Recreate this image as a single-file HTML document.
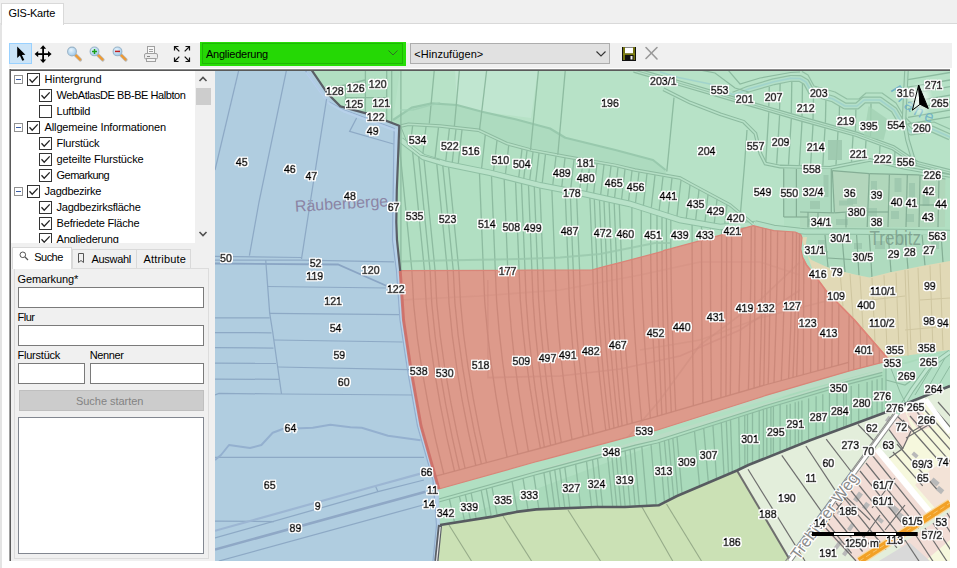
<!DOCTYPE html><html lang="de"><head><meta charset="utf-8"><title>GIS-Karte</title><style>
*{box-sizing:border-box}
html,body{margin:0;padding:0}
body{width:957px;height:568px;background:#fff;font-family:"Liberation Sans",sans-serif;font-size:11px;color:#000;position:relative;overflow:hidden}
.abs{position:absolute}
.t{position:absolute;white-space:nowrap;line-height:14px;height:14px}
.cb{position:absolute;width:13px;height:13px;border:1px solid #333;background:#fff}
.ex{position:absolute;width:9px;height:9px;border:1px solid #919191;background:#fff}
.ex:after{content:"";position:absolute;left:1px;top:3px;width:5px;height:1px;background:#3b5ea6}
.inp{position:absolute;background:#fff;border:1px solid #7a7a7a}
</style></head><body>
<div class="abs" style="left:0;top:0;width:957px;height:24px;background:#f0f0f0"></div>
<div class="abs" style="left:0px;top:23px;width:957px;height:545px;background:#fff;border-left:2px solid #e4e4e4;border-top:1px solid #d9d9d9"></div>
<div class="abs" style="left:1px;top:3px;width:63px;height:22px;background:#fff;border:1px solid #d9d9d9;border-bottom:none"></div>
<div class="t" style="left:8.5px;top:6px;letter-spacing:-0.267px;">GIS-Karte</div>
<div class="abs" style="left:9px;top:43px;width:943px;height:25px;background:#f0f0f0"></div>
<div class="abs" style="left:9px;top:43px;width:23px;height:21px;background:#cce4f7;border:1px solid #99d1ff"></div>
<svg class="abs" style="left:0;top:40px" width="957" height="30" viewBox="0 40 957 30">
<defs>
<radialGradient id="gl" cx="0.4" cy="0.35" r="0.7"><stop offset="0" stop-color="#e8f4fc"/><stop offset="1" stop-color="#9cc8ea"/></radialGradient>
</defs>
<!-- cursor arrow -->
<path d="M17.2 46.6 L17.2 58 L19.9 55.6 L22.3 60.8 L24.3 59.9 L21.9 54.9 L25.4 54.7 Z" fill="#000"/>
<!-- move -->
<g fill="#000" stroke="none">
<rect x="42.2" y="47" width="1.8" height="14"/><rect x="36" y="53.2" width="14" height="1.8"/>
<path d="M43.1 45.2 L46.2 48.8 L40 48.8 Z"/><path d="M43.1 63 L46.2 59.4 L40 59.4 Z"/>
<path d="M34.6 54.1 L38.2 51 L38.2 57.2 Z"/><path d="M51.6 54.1 L48 51 L48 57.2 Z"/>
</g>
<!-- magnifiers -->
<g id="mag1">
<path d="M75.5 55 L80.3 59.8" stroke="#b8b8b8" stroke-width="3.6" stroke-linecap="round"/>
<path d="M75.8 55.3 L80 59.5" stroke="#f09a30" stroke-width="2.2" stroke-linecap="round"/>
<circle cx="72" cy="51.5" r="4.4" fill="url(#gl)" stroke="#9ab4c8" stroke-width="1.1"/>
</g>
<g>
<path d="M98 55 L102.8 59.8" stroke="#b8b8b8" stroke-width="3.6" stroke-linecap="round"/>
<path d="M98.3 55.3 L102.5 59.5" stroke="#f09a30" stroke-width="2.2" stroke-linecap="round"/>
<circle cx="94.5" cy="51.4" r="4.4" fill="url(#gl)" stroke="#9ab4c8" stroke-width="1.1"/>
<path d="M92 51.4 H97 M94.5 48.9 V53.9" stroke="#18a018" stroke-width="1.5"/>
</g>
<g>
<path d="M121 55 L125.8 59.8" stroke="#b8b8b8" stroke-width="3.6" stroke-linecap="round"/>
<path d="M121.3 55.3 L125.5 59.5" stroke="#f09a30" stroke-width="2.2" stroke-linecap="round"/>
<circle cx="117.5" cy="51.4" r="4.4" fill="url(#gl)" stroke="#9ab4c8" stroke-width="1.1"/>
<path d="M115 51.4 H120" stroke="#c02020" stroke-width="1.5"/>
</g>
<!-- printer -->
<g fill="none" stroke="#a0a0a0" stroke-width="1">
<rect x="147.5" y="46.5" width="7" height="7" fill="#f8f8f8"/>
<path d="M149 49.5 H153 M149 51.5 H153"/>
<rect x="144.500" y="53.5" width="13" height="5.500" rx="1.500" fill="#ececec"/>
<rect x="146.500" y="58.5" width="9" height="3" fill="#f4f4f4"/>
<path d="M147 56.5 H150" stroke="#888"/>
</g>
<!-- fullscreen -->
<g fill="none" stroke="#111" stroke-width="1.2">
<path d="M174.500 50.500 V46.500 H178.500 M174.500 46.500 L179.300 51.300"/>
<path d="M185.500 46.500 H189.500 V50.500 M189.500 46.500 L184.700 51.300"/>
<path d="M174.500 57.500 V61.500 H178.500 M174.500 61.500 L179.300 56.700"/>
<path d="M185.500 61.500 H189.500 V57.500 M189.500 61.500 L184.700 56.700"/>
</g>
<!-- save -->
<g>
<rect x="622" y="47" width="14" height="14" fill="#111"/>
<rect x="623.200" y="47" width="1.600" height="13" fill="#8a8a10"/><rect x="633.200" y="47" width="1.600" height="13" fill="#8a8a10"/>
<rect x="625" y="47.500" width="8" height="6" fill="#fff"/>
<rect x="625" y="55" width="8.500" height="5.500" fill="#111"/>
<rect x="630.500" y="56" width="2" height="3.500" fill="#f4f4f4"/>
<rect x="623" y="53.5" width="12" height="1.300" fill="#8a8a10"/>
</g>
<!-- X -->
<g stroke="#9a9a9a" stroke-width="1.600" fill="none" stroke-linecap="round">
<path d="M646 47.500 L657 59"/><path d="M657 47.500 L646 58.500"/>
</g>
</svg>

<div class="abs" style="left:200px;top:42px;width:206px;height:24px;background:#26de06"></div>
<div class="abs" style="left:202px;top:43px;width:201px;height:21px;background:#25d805;border:1px solid #1fb606"></div>
<div class="t" style="left:206px;top:47px;letter-spacing:-0.237px;">Angliederung</div>
<svg class="abs" style="left:387px;top:49px" width="12" height="8" viewBox="0 0 12 8"><path d="M1.5 1.5 L6 6 L10.5 1.5" fill="none" stroke="#2f6f25" stroke-width="1"/></svg>
<div class="abs" style="left:410px;top:43px;width:200px;height:21px;background:#e1e1e1;border:1px solid #adadad"></div>
<div class="t" style="left:414.3px;top:47px;letter-spacing:0.042px;">&lt;Hinzufügen&gt;</div>
<svg class="abs" style="left:595px;top:50px" width="12" height="8" viewBox="0 0 12 8"><path d="M1.5 1.5 L6 6 L10.5 1.5" fill="none" stroke="#333" stroke-width="1.1"/></svg>
<div class="abs" style="left:9px;top:69px;width:206px;height:492px;background:#f0f0f0"></div>
<div class="abs" style="left:9px;top:69px;width:941px;height:2px;background:#5a5a5a;border-top:1px solid #8a8a8a"></div>
<div class="abs" style="left:9px;top:69px;width:2px;height:492px;background:#5a5a5a;border-left:1px solid #a0a0a0"></div>
<div class="abs" style="left:11px;top:71px;width:184px;height:172px;background:#fff;overflow:hidden" id="tree">
<div class="ex" style="left:3px;top:4px"></div>
<div class="cb" style="left:16px;top:2px"><svg width="11" height="11" viewBox="0 0 11 11" style="position:absolute;left:0;top:0"><path d="M1.5 5.3 L4.2 8.2 L9.7 2.4" fill="none" stroke="#222" stroke-width="1.3"/></svg></div>
<div class="t" style="left:33.6px;top:1px;letter-spacing:-0.053px;">Hintergrund</div>
<div class="cb" style="left:28px;top:18px"><svg width="11" height="11" viewBox="0 0 11 11" style="position:absolute;left:0;top:0"><path d="M1.5 5.3 L4.2 8.2 L9.7 2.4" fill="none" stroke="#222" stroke-width="1.3"/></svg></div>
<div class="t" style="left:45.6px;top:17px;letter-spacing:-0.429px;">WebAtlasDE BB-BE Halbton</div>
<div class="cb" style="left:28px;top:34px"></div>
<div class="t" style="left:45.6px;top:33px;letter-spacing:-0.236px;">Luftbild</div>
<div class="ex" style="left:3px;top:52px"></div>
<div class="cb" style="left:16px;top:50px"><svg width="11" height="11" viewBox="0 0 11 11" style="position:absolute;left:0;top:0"><path d="M1.5 5.3 L4.2 8.2 L9.7 2.4" fill="none" stroke="#222" stroke-width="1.3"/></svg></div>
<div class="t" style="left:33.6px;top:49px;letter-spacing:-0.144px;">Allgemeine Informationen</div>
<div class="cb" style="left:28px;top:66px"><svg width="11" height="11" viewBox="0 0 11 11" style="position:absolute;left:0;top:0"><path d="M1.5 5.3 L4.2 8.2 L9.7 2.4" fill="none" stroke="#222" stroke-width="1.3"/></svg></div>
<div class="t" style="left:45.6px;top:65px;letter-spacing:-0.225px;">Flurstück</div>
<div class="cb" style="left:28px;top:82px"><svg width="11" height="11" viewBox="0 0 11 11" style="position:absolute;left:0;top:0"><path d="M1.5 5.3 L4.2 8.2 L9.7 2.4" fill="none" stroke="#222" stroke-width="1.3"/></svg></div>
<div class="t" style="left:45.6px;top:81px;letter-spacing:-0.119px;">geteilte Flurstücke</div>
<div class="cb" style="left:28px;top:98px"><svg width="11" height="11" viewBox="0 0 11 11" style="position:absolute;left:0;top:0"><path d="M1.5 5.3 L4.2 8.2 L9.7 2.4" fill="none" stroke="#222" stroke-width="1.3"/></svg></div>
<div class="t" style="left:45.6px;top:97px;letter-spacing:-0.543px;">Gemarkung</div>
<div class="ex" style="left:3px;top:116px"></div>
<div class="cb" style="left:16px;top:114px"><svg width="11" height="11" viewBox="0 0 11 11" style="position:absolute;left:0;top:0"><path d="M1.5 5.3 L4.2 8.2 L9.7 2.4" fill="none" stroke="#222" stroke-width="1.3"/></svg></div>
<div class="t" style="left:33.6px;top:113px;letter-spacing:-0.266px;">Jagdbezirke</div>
<div class="cb" style="left:28px;top:130px"><svg width="11" height="11" viewBox="0 0 11 11" style="position:absolute;left:0;top:0"><path d="M1.5 5.3 L4.2 8.2 L9.7 2.4" fill="none" stroke="#222" stroke-width="1.3"/></svg></div>
<div class="t" style="left:45.6px;top:129px;letter-spacing:-0.239px;">Jagdbezirksfläche</div>
<div class="cb" style="left:28px;top:146px"><svg width="11" height="11" viewBox="0 0 11 11" style="position:absolute;left:0;top:0"><path d="M1.5 5.3 L4.2 8.2 L9.7 2.4" fill="none" stroke="#222" stroke-width="1.3"/></svg></div>
<div class="t" style="left:45.6px;top:145px;letter-spacing:-0.201px;">Befriedete Fläche</div>
<div class="cb" style="left:28px;top:162px"><svg width="11" height="11" viewBox="0 0 11 11" style="position:absolute;left:0;top:0"><path d="M1.5 5.3 L4.2 8.2 L9.7 2.4" fill="none" stroke="#222" stroke-width="1.3"/></svg></div>
<div class="t" style="left:45.6px;top:161px;letter-spacing:-0.237px;">Angliederung</div>
</div>
<div class="abs" style="left:195px;top:71px;width:17px;height:172px;background:#f0f0f0"></div>
<div class="abs" style="left:196px;top:88px;width:15px;height:17px;background:#cdcdcd"></div>
<svg class="abs" style="left:198px;top:75px" width="10" height="8" viewBox="0 0 10 8"><path d="M1.5 6 L5 2.5 L8.5 6" fill="none" stroke="#505050" stroke-width="1.6"/></svg>
<svg class="abs" style="left:198px;top:230px" width="10" height="8" viewBox="0 0 10 8"><path d="M1.5 2 L5 5.5 L8.5 2" fill="none" stroke="#505050" stroke-width="1.6"/></svg>
<div class="abs" style="left:14px;top:268px;width:195px;height:291px;background:#f0f0f0;border:1px solid #dcdcdc;border-top:1px solid #dcdcdc"></div>
<div class="abs" style="left:72px;top:249px;width:65px;height:19px;background:#f0f0f0;border:1px solid #d9d9d9;border-bottom:none"></div>
<div class="abs" style="left:136px;top:249px;width:55px;height:19px;background:#f0f0f0;border:1px solid #d9d9d9;border-bottom:none"></div>
<div class="abs" style="left:12px;top:247px;width:60px;height:22px;background:#fff;border:1px solid #d9d9d9;border-bottom:none"></div>
<svg class="abs" style="left:19px;top:251px" width="10" height="10" viewBox="0 0 10 10"><circle cx="3.8" cy="3.8" r="2.8" fill="none" stroke="#555" stroke-width="1"/><path d="M6 6 L9 9" stroke="#555" stroke-width="1.2"/></svg>
<div class="t" style="left:34.3px;top:250px;letter-spacing:-0.561px;">Suche</div>
<svg class="abs" style="left:77px;top:253px" width="8" height="11" viewBox="0 0 8 11"><path d="M1.5 0.5 H6.5 V9.5 L4 7.5 L1.5 9.5 Z" fill="none" stroke="#555" stroke-width="1"/></svg>
<div class="t" style="left:91.5px;top:252px;letter-spacing:-0.297px;">Auswahl</div>
<div class="t" style="left:143.6px;top:252px;letter-spacing:0.159px;">Attribute</div>
<div class="t" style="left:17.5px;top:272px;letter-spacing:-0.107px;">Gemarkung*</div>
<div class="inp" style="left:18px;top:287px;width:186px;height:21px"></div>
<div class="t" style="left:17.5px;top:310px;letter-spacing:-0.488px;">Flur</div>
<div class="inp" style="left:18px;top:325px;width:186px;height:21px"></div>
<div class="t" style="left:17.5px;top:348px;letter-spacing:-0.225px;">Flurstück</div>
<div class="t" style="left:89.7px;top:348px;letter-spacing:-0.380px;">Nenner</div>
<div class="inp" style="left:18px;top:363px;width:67px;height:21px"></div>
<div class="inp" style="left:90px;top:363px;width:114px;height:21px"></div>
<div class="abs" style="left:19px;top:390px;width:185px;height:21px;background:#cccccc;border:1px solid #bfbfbf"></div>
<div class="t" style="left:76px;top:394px;letter-spacing:-0.044px;color:#838383;">Suche starten</div>
<div class="inp" style="left:18px;top:417px;width:186px;height:137px;border-color:#828790"></div>
<svg class="abs" style="left:215px;top:71px" width="735" height="490" viewBox="215 71 735 490" font-family="Liberation Sans, sans-serif">
<defs><filter id="halo" x="0" y="0" width="100%" height="100%" filterUnits="objectBoundingBox"><feMorphology in="SourceAlpha" operator="dilate" radius="1.1" result="d"/><feGaussianBlur in="d" stdDeviation="0.45" result="b"/><feComponentTransfer in="b" result="b2"><feFuncA type="linear" slope="1.6"/></feComponentTransfer><feFlood flood-color="#fff"/><feComposite in2="b2" operator="in" result="h"/><feMerge><feMergeNode in="h"/><feMergeNode in="SourceGraphic"/></feMerge></filter>
<clipPath id="redclip"><polygon points="400.2,270.7 530.4,270.2 591.5,270.0 605.0,266.3 620.0,262.6 662.6,251.4 664.0,250.3 670.0,248.9 725.3,233.8 740.0,229.3 753.2,225.7 773.9,230.7 795.2,232.0 800.8,234.5 802.0,237.6 800.8,248.9 802.7,257.7 806.5,265.0 814.5,275.0 827.0,292.0 854.5,320.0 887.4,358.0 882.3,362.4 848.6,371.2 765.0,395.7 755.0,399.0 657.5,430.0 635.3,435.1 545.0,459.3 535.0,462.0 438.8,489.0 421.0,426.0 411.0,370.0 403.5,320.0"/></clipPath></defs>
<rect x="215" y="70" width="735" height="492" fill="#b1dfc2"/>
<polygon points="400.0,70.0 950.0,70.0 950.0,176.0 905.0,168.0 870.0,160.0 830.0,167.8 784.0,170.0 784.0,226.0 753.0,224.0 730.0,205.0 692.8,185.0 680.0,178.0 665.6,174.0 665.6,170.0 665.6,170.0 653.0,160.0 615.4,150.0 565.3,137.7 550.0,128.5 515.4,119.3 482.0,111.8 456.9,105.0 431.8,103.4 411.7,107.6 393.0,120.0" fill="#b7e2c7" />
<polygon points="400.9,126.0 408.4,124.3 440.0,126.0 478.6,130.2 507.0,143.6 532.0,150.3 565.0,156.5 615.4,165.3 635.0,170.0 665.6,174.0 665.6,170.0 665.6,170.0 653.0,160.0 615.4,150.0 565.3,137.7 550.0,128.5 515.4,119.3 482.0,111.8 456.9,105.0 431.8,103.4 411.7,107.6 393.0,120.0" fill="#addbbf" />
<polygon points="455.0,70.0 538.0,70.0 531.0,118.0 482.0,111.8 456.9,105.0" fill="#c0e6d0" />
<polyline points="400.9,140.0 423.4,157.0 445.0,163.6 490.0,172.8 540.0,185.3 580.0,193.0 630.0,204.0 680.0,220.0 720.0,227.0 755.4,224.0" fill="none" stroke="#8fc0a4" stroke-width="6.5" />
<polyline points="400.9,140.0 423.4,157.0 445.0,163.6 490.0,172.8 540.0,185.3 580.0,193.0 630.0,204.0 680.0,220.0 720.0,227.0 755.4,224.0" fill="none" stroke="#b9e2c9" stroke-width="4.5" />
<polyline points="400.9,126.0 408.4,124.3 440.0,126.0 478.6,130.2 507.0,143.6 532.0,150.3 565.0,156.5 615.4,165.3 635.0,170.0 680.0,178.0 692.8,185.0 730.0,205.0 753.0,224.0" fill="none" stroke="#8dbba0" stroke-width="3.4" />
<polyline points="400.9,126.0 408.4,124.3 440.0,126.0 478.6,130.2 507.0,143.6 532.0,150.3 565.0,156.5 615.4,165.3 635.0,170.0 680.0,178.0 692.8,185.0 730.0,205.0 753.0,224.0" fill="none" stroke="#b5dfc5" stroke-width="1.6" />
<polyline points="393.0,120.0 411.7,107.6 431.8,103.4 456.9,105.0 482.0,111.8 515.4,119.3 550.0,128.5 565.3,137.7 615.4,150.0 653.0,160.0 665.6,170.0" fill="none" stroke="#98c9ad" stroke-width="2.2" stroke-linejoin="round"/>
<g stroke="#8dbba0" stroke-width="1.3" fill="none">
<path d="M345.4 85.0 L345.4 107.6"/>
<path d="M365.4 70.0 L365.4 112.5"/>
<path d="M386.7 70.0 L386.7 120.0"/>
<path d="M391.7 70.0 L391.7 122.0"/>
<path d="M400.9 70.0 L400.9 270.0"/>
<path d="M345.0 97.6 L387.0 97.6"/>
<path d="M327.0 88.0 L345.4 85.0"/>
<path d="M345.4 85.0 L365.0 80.0"/>
<path d="M434.3 70.0 L429.3 123.5"/>
<path d="M459.4 70.0 L454.4 126.0"/>
<path d="M486.7 70.0 L479.5 130.2"/>
<path d="M538.5 70.0 L530.5 150.3"/>
<path d="M565.3 70.0 L557.8 154.7"/>
<path d="M674.0 97.6 L666.8 171.5"/>
<path d="M412.6 126.0 L410.3 144.1"/>
<path d="M426.0 126.7 L422.9 153.6"/>
<path d="M438.5 127.4 L435.1 157.6"/>
<path d="M449.4 128.5 L445.8 160.8"/>
<path d="M456.0 129.2 L452.3 162.1"/>
<path d="M462.0 129.9 L458.3 163.3"/>
<path d="M485.3 134.9 L481.6 168.1"/>
<path d="M497.0 140.4 L493.6 170.7"/>
<path d="M508.7 145.6 L505.5 173.7"/>
<path d="M522.0 149.1 L518.8 177.0"/>
<path d="M527.0 150.5 L523.8 178.3"/>
<path d="M533.0 152.0 L529.8 179.8"/>
<path d="M539.0 153.1 L535.8 181.3"/>
<path d="M545.5 154.3 L542.3 182.7"/>
<path d="M556.0 156.3 L552.8 184.8"/>
<path d="M565.0 158.0 L561.8 186.5"/>
<path d="M574.0 159.6 L570.8 188.2"/>
<path d="M583.0 161.1 L579.7 190.0"/>
<path d="M590.0 162.4 L586.7 191.5"/>
<path d="M597.0 163.6 L593.7 193.0"/>
<path d="M604.0 164.8 L600.7 194.5"/>
<path d="M611.0 166.0 L607.6 196.1"/>
<path d="M618.0 167.4 L614.6 197.6"/>
<path d="M625.0 169.1 L621.6 199.2"/>
<path d="M632.0 170.8 L628.6 200.7"/>
<path d="M639.0 172.2 L635.5 202.8"/>
<path d="M647.0 173.6 L643.4 205.3"/>
<path d="M655.0 175.1 L651.3 207.8"/>
<path d="M663.0 176.5 L659.2 210.3"/>
<path d="M672.0 178.1 L668.1 213.2"/>
<path d="M681.0 180.0 L677.0 216.0"/>
<path d="M690.0 185.0 L686.3 218.1"/>
<path d="M699.0 189.8 L695.7 219.7"/>
<path d="M708.0 194.7 L705.0 221.4"/>
<path d="M717.0 199.5 L714.3 223.0"/>
<path d="M727.0 204.9 L724.8 223.6"/>
<path d="M737.0 212.3 L735.7 222.7"/>
<path d="M399.0 141.6 L411.9 270.7"/>
<path d="M412.6 151.9 L424.5 270.6"/>
<path d="M418.7 156.4 L430.1 270.6"/>
<path d="M424.1 160.2 L435.1 270.6"/>
<path d="M436.8 164.1 L447.4 270.5"/>
<path d="M442.8 165.9 L453.3 270.5"/>
<path d="M448.6 167.3 L458.9 270.5"/>
<path d="M479.5 173.7 L483.4 270.4"/>
<path d="M491.5 176.2 L495.3 270.3"/>
<path d="M504.2 179.3 L507.8 270.3"/>
<path d="M515.6 182.2 L519.1 270.2"/>
<path d="M521.5 183.7 L525.0 270.2"/>
<path d="M528.5 185.4 L531.9 270.2"/>
<path d="M534.3 186.9 L537.6 270.2"/>
<path d="M539.9 188.3 L543.2 270.2"/>
<path d="M551.9 190.6 L555.1 270.1"/>
<path d="M565.2 193.2 L568.3 270.1"/>
<path d="M570.3 194.1 L573.3 270.1"/>
<path d="M576.6 195.3 L579.6 270.0"/>
<path d="M589.9 198.2 L592.8 269.6"/>
<path d="M594.3 199.2 L597.1 268.5"/>
<path d="M599.5 200.3 L602.2 267.1"/>
<path d="M604.0 201.3 L606.6 265.9"/>
<path d="M609.1 202.4 L611.6 264.7"/>
<path d="M614.2 203.5 L616.6 263.4"/>
<path d="M619.3 204.6 L621.6 262.2"/>
<path d="M631.9 207.6 L631.9 259.5"/>
<path d="M641.3 210.6 L641.3 257.0"/>
<path d="M650.7 213.6 L650.7 254.5"/>
<path d="M657.0 215.6 L657.0 252.9"/>
<path d="M662.0 217.2 L662.0 251.6"/>
<path d="M666.4 218.6 L666.4 249.7"/>
<path d="M670.8 220.1 L670.8 248.7"/>
<path d="M692.1 225.1 L692.1 242.9"/>
<path d="M701.5 226.8 L701.5 240.3"/>
<path d="M710.3 228.3 L710.3 237.9"/>
<path d="M721.6 229.9 L721.6 234.8"/>
<path d="M726.6 229.4 L726.6 233.4"/>
</g>
<polyline points="400.0,261.5 440.0,260.5 520.0,259.0 560.0,257.5 600.0,254.0 640.0,246.0 655.0,243.0 670.0,243.0" fill="none" stroke="#98c7ab" stroke-width="2" stroke-opacity="0.8" />
<polyline points="400.0,110.0 413.0,110.0 440.0,102.6" fill="none" stroke="#9fd0b4" stroke-width="1.5" stroke-opacity="0.8" />
<polyline points="400.5,125.7 408.0,145.0 420.5,155.0 440.0,160.0" fill="none" stroke="#8dbba0" stroke-width="1" />
<polyline points="733.6,95.0 748.7,89.0 773.8,81.7 790.5,78.4 800.0,78.5 806.0,82.0 812.0,93.0 833.0,99.0 845.0,106.0 857.0,106.0 864.0,100.0 880.0,100.0 894.0,110.0 901.0,122.0 911.0,132.0 932.0,129.0 950.0,137.0" fill="none" stroke="#8dbba0" stroke-width="7" stroke-opacity="0.9" stroke-linejoin="round"/>
<polyline points="733.6,95.0 748.7,89.0 773.8,81.7 790.5,78.4 800.0,78.5 806.0,82.0 812.0,93.0 833.0,99.0 845.0,106.0 857.0,106.0 864.0,100.0 880.0,100.0 894.0,110.0 901.0,122.0 911.0,132.0 932.0,129.0 950.0,137.0" fill="none" stroke="#b3dfc8" stroke-width="4.6" stroke-linejoin="round"/>
<polyline points="733.6,95.0 748.7,89.0 773.8,81.7 790.5,78.4 800.0,78.5 806.0,82.0 812.0,93.0 833.0,99.0 845.0,106.0 857.0,106.0 864.0,100.0 880.0,100.0 894.0,110.0 901.0,122.0 911.0,132.0 932.0,129.0 950.0,137.0" fill="none" stroke="#9fd2cb" stroke-width="1.6" stroke-opacity="0.9" stroke-linejoin="round"/>
<polyline points="634.0,70.0 640.0,71.7 680.0,83.4 742.7,101.7 800.0,118.5 856.9,134.4 893.0,147.7 917.0,163.6 950.0,172.0" fill="none" stroke="#8dbba0" stroke-width="5.6" />
<polyline points="634.0,70.0 640.0,71.7 680.0,83.4 742.7,101.7 800.0,118.5 856.9,134.4 893.0,147.7 917.0,163.6 950.0,172.0" fill="none" stroke="#b5dfc6" stroke-width="3.2" />
<polyline points="634.0,70.0 640.0,71.7 680.0,83.4 742.7,101.7 800.0,118.5 856.9,134.4 893.0,147.7 917.0,163.6 950.0,172.0" fill="none" stroke="#8dbba0" stroke-width="0.8" />
<polyline points="660.0,72.0 678.5,77.5 710.0,84.0 733.6,95.0" fill="none" stroke="#9fd2cb" stroke-width="1.6" stroke-opacity="0.9" />
<polyline points="802.0,71.5 808.0,75.0 814.0,86.0 835.0,92.0 847.0,99.0 859.0,99.0 866.0,93.0 882.0,93.0 896.0,103.0 903.0,115.0 913.0,125.0 934.0,122.0 952.0,130.0" fill="none" stroke="#8dbba0" stroke-width="1.2" stroke-opacity="0.9" stroke-linejoin="round"/>
<polyline points="700.0,70.0 715.0,73.0 735.0,88.0 748.7,92.0" fill="none" stroke="#8dbba0" stroke-width="1.2" />
<polyline points="728.0,70.0 740.0,84.0 760.0,78.0 790.5,72.5 800.0,72.0" fill="none" stroke="#8dbba0" stroke-width="1.2" />
<polyline points="906.5,70.0 904.0,120.0 907.5,140.0 915.0,165.0" fill="none" stroke="#8dbba0" stroke-width="4.6" />
<polyline points="906.5,70.0 904.0,120.0 907.5,140.0 915.0,165.0" fill="none" stroke="#b5dfc6" stroke-width="2.4" />
<polyline points="663.4,89.2 690.0,102.6 720.3,114.3 743.7,121.8 755.4,133.5 760.4,153.6 765.4,163.6 780.0,166.5 830.0,167.8 870.0,160.0 905.0,168.0 950.0,176.0" fill="none" stroke="#8dbba0" stroke-width="3.8" />
<polyline points="663.4,89.2 690.0,102.6 720.3,114.3 743.7,121.8 755.4,133.5 760.4,153.6 765.4,163.6 780.0,166.5 830.0,167.8 870.0,160.0 905.0,168.0 950.0,176.0" fill="none" stroke="#b6e1c7" stroke-width="1.6" />
<g stroke="#8dbba0" stroke-width="1.3" fill="none">
<polyline points="747.0,130.0 744.5,165.0 741.4,202.0 740.0,218.0"/>
<path d="M768.8 112.2 L765.8 161.7"/>
<path d="M779.6 115.3 L776.7 163.8"/>
<path d="M791.3 118.7 L788.5 164.7"/>
<path d="M802.0 121.9 L799.4 165.0"/>
<path d="M813.0 124.9 L810.6 165.3"/>
<path d="M825.0 128.3 L822.8 165.6"/>
<path d="M838.0 131.9 L836.0 164.8"/>
<path d="M853.0 136.1 L851.5 161.9"/>
<path d="M866.0 140.6 L864.9 159.4"/>
<path d="M880.0 145.7 L879.2 159.6"/>
<path d="M895.0 151.8 L894.3 163.0"/>
<path d="M769.3 86.7 L768.8 106.6"/>
<path d="M780.1 84.1 L779.6 109.7"/>
<path d="M791.8 81.9 L791.3 113.1"/>
<path d="M802.5 83.2 L802.0 116.3"/>
<path d="M813.5 96.8 L813.0 119.3"/>
<path d="M825.9 100.3 L825.4 122.8"/>
<path d="M839.5 106.0 L839.0 126.6"/>
<path d="M855.9 109.5 L855.4 131.2"/>
<path d="M871.0 103.5 L870.5 136.6"/>
<path d="M908.0 79.7 L950.0 72.5"/>
<path d="M908.0 87.2 L950.0 80.0"/>
<path d="M908.0 93.9 L950.0 86.7"/>
<path d="M908.0 102.3 L950.0 95.1"/>
<path d="M908.0 109.0 L950.0 101.8"/>
<path d="M908.0 117.3 L950.0 110.1"/>
<path d="M908.0 124.0 L950.0 116.8"/>
</g>
<polyline points="755.0,223.5 773.9,228.0 805.0,231.5 850.0,231.5 900.0,232.0 950.0,233.0" fill="none" stroke="#8dbba0" stroke-width="6.6" />
<polyline points="755.0,223.5 773.9,228.0 805.0,231.5 850.0,231.5 900.0,232.0 950.0,233.0" fill="none" stroke="#b3dfc5" stroke-width="4.6" />
<polygon points="868.6,106.0 888.7,120.0 883.6,140.0 863.6,137.0" fill="#a3d2b4" opacity="0.8"/>
<polygon points="783.7,168.5 831.3,169.0 831.3,217.0 783.7,217.0" fill="#aedabf" />
<polygon points="832.3,170.6 869.3,173.7 867.2,210.7 834.4,212.8" fill="#b3d6bc" />
<polygon points="869.3,173.7 917.9,174.8 945.4,179.0 945.0,227.0 869.3,227.6" fill="#b0d7bb" />
<polygon points="800.0,212.0 868.0,212.0 869.3,227.6 800.0,227.5" fill="#afd8bc" />
<polygon points="806.0,235.0 950.0,235.0 950.0,261.0 922.0,266.0 889.5,272.5 869.5,277.5 857.0,275.0 830.7,268.7 811.5,260.0 806.0,250.0" fill="#afdbbf" />
<rect x="823.5" y="175.0" width="5" height="22" fill="#9cc7ad" opacity="0.85"/>
<rect x="839.0" y="200.5" width="14" height="5" fill="#9cc7ad" opacity="0.85"/>
<rect x="847.0" y="196.0" width="10" height="8" fill="#9cc7ad" opacity="0.85"/>
<rect x="871.0" y="181.0" width="6" height="18" fill="#9cc7ad" opacity="0.85"/>
<rect x="894.5" y="178.0" width="7" height="14" fill="#9cc7ad" opacity="0.85"/>
<rect x="909.0" y="183.0" width="6" height="14" fill="#9cc7ad" opacity="0.85"/>
<rect x="922.5" y="194.0" width="7" height="12" fill="#9cc7ad" opacity="0.85"/>
<rect x="836.0" y="219.0" width="12" height="6" fill="#9cc7ad" opacity="0.85"/>
<rect x="867.0" y="208.0" width="10" height="8" fill="#9cc7ad" opacity="0.85"/>
<rect x="875.0" y="241.0" width="10" height="8" fill="#9cc7ad" opacity="0.85"/>
<rect x="896.0" y="235.0" width="8" height="10" fill="#9cc7ad" opacity="0.85"/>
<rect x="931.0" y="239.0" width="8" height="10" fill="#9cc7ad" opacity="0.85"/>
<rect x="810.0" y="201.0" width="10" height="8" fill="#9cc7ad" opacity="0.85"/>
<rect x="818.0" y="240.0" width="8" height="8" fill="#9cc7ad" opacity="0.85"/>
<rect x="828.0" y="140.0" width="14" height="20" fill="#9cc7ad" opacity="0.85"/>
<rect x="808.0" y="219.0" width="8" height="6" fill="#9cc7ad" opacity="0.85"/>
<rect x="891.0" y="211.0" width="8" height="8" fill="#9cc7ad" opacity="0.85"/>
<rect x="906.0" y="214.0" width="8" height="8" fill="#9cc7ad" opacity="0.85"/>
<rect x="854.0" y="243.0" width="8" height="6" fill="#9cc7ad" opacity="0.85"/>
<g stroke="#84ae95" stroke-width="1.2" fill="none">
<path d="M783.7 168.5 L783.7 217.0"/>
<path d="M796.4 169.0 L796.4 217.0"/>
<path d="M783.7 217.0 L808.0 217.0"/>
<path d="M831.3 169.0 L831.3 213.0"/>
<path d="M832.3 170.6 L869.3 173.7"/>
<path d="M869.3 173.7 L917.9 174.8"/>
<path d="M917.9 174.8 L945.4 179.0"/>
<path d="M867.2 210.7 L834.4 212.8"/>
<path d="M834.4 212.8 L832.3 170.6"/>
<path d="M869.3 173.7 L867.2 227.0"/>
<path d="M889.4 174.5 L888.0 227.0"/>
<path d="M907.3 175.0 L906.0 227.0"/>
<path d="M920.0 176.0 L919.0 227.0"/>
<path d="M939.0 178.5 L938.0 227.0"/>
<path d="M919.0 205.0 L945.0 205.0"/>
<path d="M867.2 212.0 L889.0 212.0"/>
<path d="M800.0 212.0 L834.0 212.8"/>
<path d="M808.0 212.0 L808.0 227.5"/>
<path d="M818.0 212.0 L818.0 227.5"/>
<path d="M846.0 213.0 L846.0 227.5"/>
<path d="M825.0 235.0 L828.0 267.0"/>
<path d="M841.8 235.0 L845.0 272.0"/>
<path d="M856.6 235.0 L859.0 275.5"/>
<path d="M869.3 235.0 L872.0 277.0"/>
<path d="M888.3 235.0 L891.0 272.0"/>
<path d="M905.2 235.0 L908.0 269.0"/>
<path d="M922.1 235.0 L925.0 265.5"/>
<path d="M941.1 235.0 L943.0 262.5"/>
<path d="M806.0 250.0 L828.0 252.0"/>
<path d="M828.0 258.0 L859.0 260.0"/>
</g>
<polygon points="801.0,237.6 807.0,237.0 806.0,243.0 806.5,254.0 811.5,260.0 830.7,268.7 857.0,275.0 869.5,277.5 889.5,272.5 922.0,266.0 950.0,261.0 950.0,350.0 887.0,358.0 827.0,292.0 814.5,275.0" fill="#e1d9b6" />
<g stroke="#cfc6a0" stroke-width="1" fill="none">
<path d="M840.0 271.8 L843.0 306.3"/>
<path d="M850.0 274.1 L853.0 317.3"/>
<path d="M860.0 276.3 L863.0 328.3"/>
<path d="M872.0 278.0 L875.0 341.5"/>
<path d="M884.0 275.3 L887.0 350.0"/>
<path d="M896.0 272.7 L899.0 350.0"/>
<path d="M908.0 270.1 L911.0 350.0"/>
<path d="M918.0 267.9 L921.0 350.0"/>
<path d="M930.0 265.6 L933.0 350.0"/>
<path d="M940.0 263.8 L943.0 350.0"/>
<path d="M905 270 L908 356 M920 300 L950 298 M905 330 L950 326 M870 300 L905 296"/>
</g>
<text x="869.5" y="245" font-size="21" fill="#7b9d8b" fill-opacity="0.85" textLength="51.500" lengthAdjust="spacingAndGlyphs">Trebitz</text>
<path id="franep" d="M890.500 89.500 Q 901 113 936 124.500" fill="none"/><text font-size="16" fill="#6fb2c6" fill-opacity="0.95" letter-spacing="3.2"><textPath href="#franep">Frane</textPath></text>
<polygon points="440.0,525.0 491.2,516.9 516.3,511.9 536.3,509.4 596.0,507.0 625.0,507.0 658.6,505.3 677.0,496.0 737.0,470.5 790.5,561.0 436.4,561.0" fill="#cbe1b5" />
<polygon points="737.0,470.5 748.4,465.0 810.2,440.2 887.2,411.8 905.0,404.0 950.0,386.0 950.0,561.0 790.5,561.0" fill="#e3eedb" />
<polyline points="449.0,525.0 471.5,561.0" fill="none" stroke="#96ab89" stroke-width="1.1" />
<polyline points="503.0,516.0 531.6,561.0" fill="none" stroke="#96ab89" stroke-width="1.1" />
<polyline points="568.0,510.0 600.5,561.0" fill="none" stroke="#96ab89" stroke-width="1.1" />
<polyline points="641.4,506.0 672.7,561.0" fill="none" stroke="#96ab89" stroke-width="1.1" />
<polyline points="666.5,504.0 701.5,561.0" fill="none" stroke="#96ab89" stroke-width="1.1" />
<polyline points="737.0,470.5 790.5,561.0" fill="none" stroke="#6e6e6e" stroke-width="2" />
<polygon points="876.6,448.6 817.0,523.5 856.0,561.0 862.0,561.0 950.0,505.0 950.0,500.0 928.4,513.0" fill="#f2ddd6" />
<polygon points="897.2,413.8 925.7,399.5 950.0,432.8 950.0,503.0 928.4,513.0 876.6,448.6" fill="#f6f8dd" />
<polygon points="882.0,433.6 889.0,429.6 902.8,448.6 889.3,458.0 877.4,448.6" fill="#e3eedb" />
<polygon points="889.0,429.6 897.2,414.5 905.0,411.0 913.0,431.0 902.8,448.6" fill="#f2ddd6" />
<polygon points="906.7,413.8 919.4,408.0 932.0,426.5 919.4,431.2" fill="#f2ddd6" />
<polygon points="930.0,470.0 950.0,458.0 950.0,500.0 935.0,508.0 915.0,485.0" fill="#f2ddd6" opacity="0.8"/>
<polygon points="900.0,545.0 950.0,512.0 950.0,545.0 925.0,561.0 905.0,561.0" fill="#f2ddd6" />
<polygon points="925.0,561.0 950.0,540.0 950.0,561.0" fill="#f6f8dd" />
<polygon points="930.0,400.0 950.0,390.0 950.0,430.0" fill="#e3eedb" />
<polygon points="879.0,561.0 909.4,542.4 930.0,561.0" fill="#d9d9d9" />
<rect x="853.0" y="494.5" width="10" height="5" fill="#b9b9b9" transform="rotate(-54 858 497)"/>
<rect x="862.5" y="503.5" width="7" height="5" fill="#b9b9b9" transform="rotate(-54 866 506)"/>
<rect x="837.0" y="510.0" width="6" height="4" fill="#b9b9b9" transform="rotate(-54 840 512)"/>
<rect x="887.0" y="505.0" width="12" height="6" fill="#b9b9b9" transform="rotate(40 893 508)"/>
<rect x="896.0" y="513.0" width="8" height="6" fill="#b9b9b9" transform="rotate(40 900 516)"/>
<rect x="876.5" y="518.0" width="7" height="4" fill="#b9b9b9" transform="rotate(40 880 520)"/>
<rect x="931.0" y="479.5" width="8" height="5" fill="#b9b9b9" transform="rotate(40 935 482)"/>
<rect x="936.5" y="487.5" width="7" height="5" fill="#b9b9b9" transform="rotate(40 940 490)"/>
<rect x="847.0" y="525.0" width="8" height="4" fill="#b9b9b9" transform="rotate(-54 851 527)"/>
<rect x="833.5" y="543.0" width="9" height="4" fill="#b9b9b9" transform="rotate(-54 838 545)"/>
<rect x="842.0" y="550.0" width="8" height="4" fill="#b9b9b9" transform="rotate(-54 846 552)"/>
<rect x="912.0" y="453.0" width="6" height="4" fill="#b9b9b9" transform="rotate(40 915 455)"/>
<rect x="885.0" y="417.5" width="6" height="3" fill="#b9b9b9" transform="rotate(-54 888 419)"/>
<rect x="896.0" y="422.5" width="6" height="3" fill="#b9b9b9" transform="rotate(-54 899 424)"/>
<g stroke="#6e6e6e" stroke-width="1.2" fill="none">
<path d="M748.0 469.3 L805.0 561.0"/>
<path d="M781.8 455.3 L821.5 511.6"/>
<path d="M805.9 446.0 L838.5 495.3"/>
<path d="M826.2 439.2 L852.3 473.0"/>
<path d="M858.0 424.5 L876.0 443.0"/>
<path d="M872.0 455.0 L920.9 515.8"/>
<path d="M866.0 463.0 L918.7 528.4"/>
<path d="M860.0 471.0 L910.2 533.3"/>
<path d="M854.0 479.0 L904.2 541.3"/>
<path d="M848.0 487.0 L896.9 547.8"/>
<path d="M842.0 495.0 L885.9 549.5"/>
<path d="M836.0 503.0 L874.9 551.3"/>
<path d="M830.0 511.0 L862.6 551.5"/>
<path d="M824.0 519.0 L851.6 553.3"/>
<path d="M826 524 L846 497 M846 497 L870 520 M872 508 L895 478 M862 540 L880 515 M885 530 L905 505"/>
<path d="M903.0 420.0 L942.6 465.0"/>
<path d="M910.0 416.0 L972.7 487.2"/>
<path d="M917.0 412.0 L981.7 485.5"/>
<path d="M924.0 409.0 L976.8 469.0"/>
<path d="M931.0 405.0 L970.6 450.0"/>
<path d="M938.0 402.0 L965.7 433.5"/>
<path d="M893.0 452.0 L922.7 485.8"/>
<path d="M897.0 444.0 L936.6 489.0"/>
<path d="M889 429.600 L902.800 448.600 L889.300 458 M902.800 448.600 L911 431 M897 416 L913 431 L925 424 M906 438 L930 424"/>
<path d="M905.0 540.0 L921.5 565.0"/>
<path d="M915.0 534.0 L937.0 567.4"/>
<path d="M925.0 528.0 L952.5 569.8"/>
<path d="M933.0 523.0 L960.5 564.8"/>
<path d="M941.0 518.0 L965.8 555.6"/>
<path d="M947.0 513.0 L969.0 546.4"/>
<path d="M822 524 L856 561"/>
</g>
<polyline points="785.5,561.0 893.2,413.8" fill="none" stroke="#8c8c8c" stroke-width="1.1" />
<polyline points="789.5,561.0 897.2,413.8" fill="none" stroke="#8c8c8c" stroke-width="5.2" />
<polyline points="789.5,561.0 897.2,413.8" fill="none" stroke="#ffffff" stroke-width="3.2" />
<polyline points="877.0,449.0 929.5,512.0" fill="none" stroke="#ffffff" stroke-width="6.5" />
<polyline points="897.2,413.8 925.7,399.5" fill="none" stroke="#ffffff" stroke-width="4" />
<polyline points="925.7,399.5 950.0,432.8" fill="none" stroke="#ffffff" stroke-width="5" />
<polyline points="859.4,561.0 950.0,503.0" fill="none" stroke="#f7d9a0" stroke-width="9" />
<polyline points="859.4,561.0 950.0,503.0" fill="none" stroke="#f2a126" stroke-width="6.5" />
<polyline points="859.4,561.0 950.0,503.0" fill="none" stroke="#f6c46c" stroke-width="1" stroke-dasharray="5 3"/>
<text font-size="16" fill="#8c8c8c" stroke="#fff" stroke-width="2.5" paint-order="stroke" style="paint-order:stroke" text-anchor="middle" transform="translate(829,519) rotate(-53.8)" letter-spacing="0.3">Trebitzer Weg</text>
<polygon points="887.4,358.0 882.3,362.4 848.6,371.2 765.0,395.7 755.0,399.0 657.5,430.0 635.3,435.1 545.0,459.3 535.0,462.0 438.8,489.0 950.0,350.0 950.0,387.0 905.0,404.0 887.2,411.8 810.2,440.2 748.4,465.0 737.0,470.5 677.0,496.0 658.6,505.3 625.0,507.0 596.0,507.0 536.3,509.4 516.3,511.9 491.2,516.9 440.0,525.0" fill="#a9dabb" />
<polygon points="887.4,358.0 882.3,362.4 848.6,371.2 765.0,395.7 755.0,399.0 657.5,430.0 635.3,435.1 545.0,459.3 535.0,462.0 438.8,489.0 886.0,368.0 438.8,499.0 535.0,472.0 545.0,469.3 635.3,445.1 657.5,440.0 755.0,409.0 765.0,405.7 848.6,381.2 882.3,372.4" fill="#badcc5" />
<polyline points="882.3,372.4 848.6,381.2 765.0,405.7 755.0,409.0 657.5,440.0 635.3,445.1 545.0,469.3 535.0,472.0 438.8,499.0" fill="none" stroke="#8dbba0" stroke-width="1.2" />
<polyline points="882.3,375.4 848.6,384.2 765.0,408.7 755.0,412.0 657.5,443.0 635.3,448.1 545.0,472.3 535.0,475.0 438.8,502.0" fill="none" stroke="#8dbba0" stroke-width="1.2" />
<polygon points="886.0,362.0 906.0,364.0 950.0,350.3 950.0,387.0 905.0,404.0 897.0,407.0 886.0,412.0" fill="#b3dfc5" />
<polyline points="897.2,413.8 912.0,390.0 928.0,367.7 950.0,352.0" fill="none" stroke="#8dbba0" stroke-width="5" />
<polyline points="897.2,413.8 912.0,390.0 928.0,367.7 950.0,352.0" fill="none" stroke="#bfe5cf" stroke-width="3" />
<polyline points="886.0,366.0 886.0,412.0" fill="none" stroke="#8dbba0" stroke-width="1.2" />
<polyline points="886.0,380.0 905.0,385.0 915.0,378.0" fill="none" stroke="#8dbba0" stroke-width="1.2" />
<polyline points="890.0,366.0 900.0,392.0 905.0,402.0" fill="none" stroke="#8dbba0" stroke-width="1" />
<polyline points="915.0,395.0 935.0,362.0" fill="none" stroke="#8dbba0" stroke-width="1" />
<polyline points="925.0,393.0 945.0,358.0" fill="none" stroke="#8dbba0" stroke-width="1" />
<polyline points="937.0,388.0 950.0,366.0" fill="none" stroke="#8dbba0" stroke-width="1" />
<g stroke="#8dbba0" stroke-width="1.3" fill="none">
<path d="M449.4 499.0 L454.4 521.7"/>
<path d="M459.4 496.2 L464.4 520.1"/>
<path d="M465.3 494.6 L470.3 519.2"/>
<path d="M471.1 492.9 L476.1 518.3"/>
<path d="M481.2 490.1 L486.2 516.7"/>
<path d="M486.2 488.7 L491.2 515.9"/>
<path d="M492.0 487.1 L497.0 514.7"/>
<path d="M512.1 481.4 L517.1 510.8"/>
<path d="M523.0 478.4 L528.0 509.4"/>
<path d="M533.8 475.3 L538.8 508.3"/>
<path d="M543.9 472.6 L548.9 507.9"/>
<path d="M549.7 471.0 L554.7 507.7"/>
<path d="M554.7 469.7 L559.7 507.5"/>
<path d="M559.7 468.4 L564.7 507.3"/>
<path d="M564.8 467.0 L569.8 507.1"/>
<path d="M575.6 464.1 L580.6 506.6"/>
<path d="M586.5 461.2 L591.5 506.2"/>
<path d="M592.5 459.6 L597.5 506.0"/>
<path d="M597.5 458.2 L602.5 506.0"/>
<path d="M607.6 455.5 L612.6 506.0"/>
<path d="M611.7 454.4 L616.7 506.0"/>
<path d="M615.9 453.3 L620.9 506.0"/>
<path d="M620.1 452.2 L625.1 506.0"/>
<path d="M625.1 450.8 L630.1 505.7"/>
<path d="M630.1 449.5 L635.1 505.5"/>
<path d="M634.3 448.4 L639.3 505.3"/>
<path d="M641.8 446.6 L646.8 504.9"/>
<path d="M651.0 444.5 L656.0 504.4"/>
<path d="M659.4 442.4 L664.4 501.4"/>
<path d="M664.4 440.8 L669.4 498.8"/>
<path d="M668.6 439.5 L673.6 496.7"/>
<path d="M672.8 438.1 L677.8 494.7"/>
<path d="M677.0 436.8 L682.0 492.9"/>
<path d="M694.5 431.2 L699.5 485.4"/>
<path d="M703.7 428.3 L708.3 481.7"/>
<path d="M712.9 425.4 L716.5 478.2"/>
<path d="M721.3 422.7 L724.0 475.0"/>
<path d="M726.3 421.1 L728.5 473.1"/>
<path d="M730.5 419.8 L732.3 471.5"/>
<path d="M738.8 417.2 L739.7 468.2"/>
<path d="M744.7 415.3 L744.9 465.7"/>
<path d="M747.5 414.4 L747.5 464.4"/>
<path d="M752.5 412.8 L752.5 462.4"/>
<path d="M759.2 410.6 L759.2 459.7"/>
<path d="M763.4 409.2 L763.4 458.0"/>
<path d="M766.8 408.2 L766.8 456.6"/>
<path d="M770.9 407.0 L770.9 455.0"/>
<path d="M773.4 406.2 L773.4 454.0"/>
<path d="M780.1 404.3 L780.1 451.3"/>
<path d="M786.8 404.8 L786.8 448.6"/>
<path d="M790.2 403.8 L790.2 447.2"/>
<path d="M795.2 402.3 L795.2 445.2"/>
<path d="M798.5 401.4 L798.5 443.9"/>
<path d="M801.9 400.4 L801.9 442.5"/>
<path d="M808.6 398.4 L808.6 439.8"/>
<path d="M816.1 396.2 L816.1 437.0"/>
<path d="M822.8 394.3 L822.8 434.6"/>
<path d="M829.5 392.3 L829.5 432.1"/>
<path d="M837.0 390.1 L837.0 429.3"/>
<path d="M843.7 388.1 L843.7 426.8"/>
<path d="M846.2 387.4 L846.2 425.9"/>
<path d="M851.2 386.0 L851.2 424.1"/>
<path d="M858.7 384.1 L858.7 421.3"/>
<path d="M867.1 381.9 L867.1 418.2"/>
<path d="M872.1 380.6 L872.1 416.4"/>
<path d="M877.1 379.3 L877.1 414.5"/>
<path d="M882.1 378.0 L882.1 412.7"/>
</g>
<polygon points="215.0,70.0 311.6,70.0 327.8,93.8 340.4,106.4 368.0,113.9 399.3,125.7 398.0,160.3 396.8,190.0 396.3,222.0 397.0,240.0 400.2,271.0 403.5,320.0 411.0,370.0 421.0,426.0 438.8,489.0 440.0,525.0 436.4,561.0 215.0,561.0" fill="#b0cde0" />
<polyline points="305.0,70.0 327.8,101.4 342.9,109.5 394.2,128.5 393.0,202.0 392.5,240.0 396.5,271.0 400.0,320.0 407.5,370.0 417.5,426.0 433.0,480.0 436.5,525.0 433.0,561.0" fill="none" stroke="#93aece" stroke-width="1.2" />
<polyline points="396.2,128.5 395.0,202.0 394.5,240.0 398.5,271.0 402.0,320.0 409.5,370.0 419.5,426.0 435.0,480.0 438.5,525.0 435.0,561.0" fill="none" stroke="#b9d2ec" stroke-width="2.4" stroke-opacity="0.8" />
<polyline points="306.5,72.2 329.3,103.6 344.4,111.7 395.7,130.7" fill="none" stroke="#b9d2ec" stroke-width="2.4" stroke-opacity="0.8" />
<polyline points="238.8,70.0 215.0,170.0" fill="none" stroke="#8da9c5" stroke-width="1.25" />
<polyline points="286.5,70.0 259.0,202.0 249.4,255.7" fill="none" stroke="#8da9c5" stroke-width="1.25" />
<polyline points="326.6,98.8 310.3,202.0 301.5,259.0" fill="none" stroke="#8da9c5" stroke-width="1.25" />
<polyline points="356.6,118.0 349.6,131.4 393.5,144.0" fill="none" stroke="#8da9c5" stroke-width="1.25" />
<polyline points="215.0,256.4 301.5,257.5" fill="none" stroke="#8da9c5" stroke-width="1.25" />
<polyline points="215.0,260.0 301.5,260.0 394.0,261.8" fill="none" stroke="#8da9c5" stroke-width="1.25" />
<polyline points="265.7,260.0 269.7,313.4 272.7,332.0 281.5,394.0" fill="none" stroke="#8da9c5" stroke-width="1.25" />
<polyline points="267.0,286.5 388.0,288.0" fill="none" stroke="#8da9c5" stroke-width="1.25" />
<polyline points="269.7,313.4 399.0,314.6" fill="none" stroke="#8da9c5" stroke-width="1.25" />
<polyline points="215.0,317.9 269.7,317.9" fill="none" stroke="#8da9c5" stroke-width="1.25" />
<polyline points="215.0,332.5 271.5,332.8" fill="none" stroke="#8da9c5" stroke-width="1.25" />
<polyline points="215.0,347.6 273.5,348.0" fill="none" stroke="#8da9c5" stroke-width="1.25" />
<polyline points="215.0,363.0 276.0,363.4" fill="none" stroke="#8da9c5" stroke-width="1.25" />
<polyline points="215.0,379.0 279.0,379.4" fill="none" stroke="#8da9c5" stroke-width="1.25" />
<polyline points="274.0,340.0 402.5,342.0" fill="none" stroke="#8da9c5" stroke-width="1.25" />
<polyline points="278.0,367.0 409.0,369.6" fill="none" stroke="#8da9c5" stroke-width="1.25" />
<polyline points="215.0,395.0 219.0,393.4 281.5,394.0 412.5,395.0" fill="none" stroke="#8da9c5" stroke-width="1.25" />
<polyline points="215.0,457.3 424.0,457.3" fill="none" stroke="#8da9c5" stroke-width="1.25" />
<polyline points="215.0,521.0 274.0,521.6" fill="none" stroke="#8da9c5" stroke-width="1.25" />
<polyline points="215.0,538.0 378.0,491.7 424.0,480.0" fill="none" stroke="#8da9c5" stroke-width="1.25" />
<polyline points="218.8,561.0 423.0,505.0" fill="none" stroke="#8da9c5" stroke-width="1.25" />
<polyline points="375.4,486.0 378.0,491.7" fill="none" stroke="#8da9c5" stroke-width="1.25" />
<polyline points="215.0,263.5 338.0,264.5 388.0,286.5" fill="none" stroke="#8aa5c4" stroke-width="1.8" />
<polyline points="215.0,530.8 375.4,486.0 420.5,473.6" fill="none" stroke="#9cb6d3" stroke-width="2.2" />
<polyline points="215.0,549.5 425.5,491.7" fill="none" stroke="#8fa8c6" stroke-width="2.6" />
<polyline points="215.0,460.0 221.0,455.0 229.0,445.0 250.0,448.0 261.4,445.0 272.7,432.8 282.7,429.0 312.8,427.8 330.3,424.8 350.4,427.3 361.7,427.8 388.0,435.8 420.5,440.3" fill="none" stroke="#94b0cf" stroke-width="2" stroke-linejoin="round"/>
<text x="341.5" y="209" font-size="16" fill="#8b84a4" text-anchor="middle" transform="rotate(-3.5 341.500 204)">Räuberberge</text>
<polygon points="400.2,270.7 530.4,270.2 591.5,270.0 605.0,266.3 620.0,262.6 662.6,251.4 664.0,250.3 670.0,248.9 725.3,233.8 740.0,229.3 753.2,225.7 773.9,230.7 795.2,232.0 800.8,234.5 802.0,237.6 800.8,248.9 802.7,257.7 806.5,265.0 814.5,275.0 827.0,292.0 854.5,320.0 887.4,358.0 882.3,362.4 848.6,371.2 765.0,395.7 755.0,399.0 657.5,430.0 635.3,435.1 545.0,459.3 535.0,462.0 438.8,489.0 421.0,426.0 411.0,370.0 403.5,320.0" fill="#dd9a8b" />
<g stroke="#c98678" stroke-width="1.3" fill="none" stroke-opacity="0.9">
<polyline points="411.9,270.7 413.7,304.6 417.4,338.5 422.4,372.4 428.6,406.3 435.7,440.1 443.8,474.0"/>
<polyline points="424.5,270.6 426.2,304.0 429.7,337.5 434.4,370.9 440.2,404.3 446.9,437.8 454.5,471.2"/>
<polyline points="430.1,270.6 431.8,303.8 435.2,337.0 439.8,370.2 445.5,403.4 452.1,436.6 459.5,469.9"/>
<polyline points="435.1,270.6 436.8,303.5 440.3,336.5 445.0,369.5 450.8,402.4 457.5,435.4 465.1,468.4"/>
<polyline points="447.4,270.5 449.0,303.0 452.3,335.5 456.8,368.0 462.2,400.5 468.6,433.0 475.8,465.5"/>
<polyline points="453.3,270.5 454.9,302.7 458.1,335.0 462.6,367.2 468.0,399.5 474.3,431.7 481.4,464.0"/>
<polyline points="458.9,270.5 460.5,302.5 463.6,334.5 468.0,366.6 473.3,398.6 479.4,430.6 486.4,462.7"/>
<polyline points="483.4,270.4 484.7,301.5 487.5,332.6 491.2,363.8 495.8,394.9 501.1,426.0 507.1,457.1"/>
<polyline points="495.3,270.3 496.6,301.0 499.2,331.6 502.7,362.3 507.1,393.0 512.1,423.6 517.8,454.3"/>
<polyline points="507.8,270.3 509.0,300.5 511.4,330.7 514.6,360.9 518.6,391.1 523.2,421.2 528.4,451.4"/>
<polyline points="519.1,270.2 520.3,299.9 522.8,329.6 526.1,359.2 530.2,388.9 535.0,418.6 540.4,448.2"/>
<polyline points="525.0,270.2 526.1,299.7 528.3,329.2 531.4,358.7 535.1,388.2 539.5,417.7 544.4,447.2"/>
<polyline points="531.9,270.2 533.0,299.4 535.1,328.6 538.1,357.8 541.7,387.0 545.9,416.2 550.7,445.4"/>
<polyline points="537.6,270.2 538.6,299.2 540.7,328.1 543.6,357.1 547.1,386.1 551.1,415.1 555.7,444.1"/>
<polyline points="543.2,270.2 544.2,298.9 546.3,327.6 549.2,356.3 552.7,385.1 556.7,413.8 561.3,442.5"/>
<polyline points="555.1,270.1 556.1,298.4 558.0,326.6 560.7,354.9 563.9,383.1 567.7,411.4 572.0,439.6"/>
<polyline points="568.3,270.1 569.2,297.8 570.9,325.6 573.2,353.3 576.1,381.0 579.5,408.8 583.3,436.5"/>
<polyline points="573.3,270.1 574.2,297.5 576.0,325.0 578.4,352.5 581.5,380.0 585.0,407.5 588.9,435.0"/>
<polyline points="579.6,270.0 580.4,297.3 582.0,324.6 584.1,351.9 586.8,379.2 589.8,406.5 593.3,433.8"/>
<polyline points="592.8,269.6 593.5,296.4 595.0,323.2 597.1,350.0 599.6,376.8 602.5,403.6 605.8,430.4"/>
<polyline points="597.1,268.5 597.8,295.3 599.3,322.1 601.2,348.9 603.6,375.7 606.4,402.5 609.6,429.3"/>
<polyline points="602.2,267.1 602.9,293.9 604.2,320.8 606.1,347.6 608.4,374.4 611.0,401.3 614.0,428.1"/>
<polyline points="606.6,265.9 607.3,292.7 608.6,319.6 610.5,346.4 612.8,373.2 615.4,400.1 618.4,426.9"/>
<polyline points="611.6,264.7 612.2,291.5 613.4,318.4 615.1,345.3 617.1,372.2 619.4,399.0 622.1,425.9"/>
<polyline points="616.6,263.4 617.2,290.3 618.4,317.1 620.1,344.0 622.1,370.8 624.5,397.7 627.2,424.5"/>
<polyline points="621.6,262.2 622.2,289.0 623.4,315.8 625.1,342.7 627.1,369.5 629.5,396.3 632.2,423.1"/>
<polyline points="631.9,259.5 632.5,286.3 633.6,313.2 635.1,340.0 637.0,366.9 639.1,393.7 641.6,420.6"/>
<polyline points="641.3,257.0 641.8,283.9 642.9,310.7 644.3,337.6 646.1,364.4 648.1,391.3 650.4,418.2"/>
<polyline points="650.7,254.5 651.1,281.5 651.9,308.4 652.9,335.4 654.3,362.3 655.8,389.2 657.5,416.2"/>
<polyline points="657.0,252.9 657.3,279.9 657.8,306.9 658.6,333.9 659.6,360.9 660.7,387.9 661.9,414.9"/>
<polyline points="662.0,251.6 662.2,278.6 662.7,305.6 663.4,332.6 664.2,359.6 665.2,386.6 666.3,413.6"/>
<polyline points="666.4,249.7 666.7,276.8 667.2,303.9 668.0,331.0 669.0,358.0 670.1,385.1 671.3,412.2"/>
<polyline points="670.8,248.7 671.1,275.7 671.6,302.8 672.4,329.8 673.4,356.8 674.5,383.9 675.7,410.9"/>
<polyline points="692.1,242.9 692.2,270.0 692.3,297.2 692.5,324.3 692.7,351.5 693.0,378.6 693.3,405.8"/>
<polyline points="701.5,240.3 701.6,267.4 701.7,294.6 701.9,321.7 702.1,348.8 702.4,375.9 702.7,403.1"/>
<polyline points="710.3,237.9 710.4,265.0 710.5,292.1 710.7,319.2 710.9,346.3 711.2,373.4 711.5,400.5"/>
<polyline points="721.6,234.8 721.6,262.0 721.5,289.1 721.4,316.3 721.2,343.5 721.1,370.6 720.9,397.8"/>
<polyline points="726.6,233.4 726.6,260.6 726.5,287.7 726.4,314.9 726.2,342.0 726.1,369.2 725.9,396.3"/>
<polyline points="731.6,231.9 731.5,259.1 731.4,286.3 731.2,313.5 730.9,340.7 730.6,367.9 730.3,395.1"/>
<polyline points="741.9,228.8 741.7,256.1 741.4,283.4 740.9,310.7 740.4,338.0 739.7,365.2 739.0,392.5"/>
<polyline points="751.3,226.2 751.1,253.5 750.8,280.8 750.3,308.0 749.8,335.3 749.1,362.5 748.4,389.8"/>
<polyline points="755.0,226.1 754.9,253.1 754.8,280.1 754.7,307.1 754.5,334.2 754.3,361.2 754.1,388.2"/>
<polyline points="762.6,228.0 762.4,254.4 762.1,280.8 761.6,307.3 761.1,333.7 760.4,360.1 759.7,386.5"/>
<polyline points="765.7,228.7 765.6,254.8 765.4,280.9 765.1,307.0 764.7,333.1 764.3,359.2 763.8,385.3"/>
<polyline points="770.8,230.0 770.7,255.6 770.4,281.3 769.9,307.0 769.4,332.7 768.9,358.4 768.2,384.1"/>
<polyline points="777.6,230.9 777.4,256.2 777.0,281.5 776.4,306.7 775.7,332.0 774.9,357.3 774.0,382.6"/>
<polyline points="785.2,231.4 785.0,256.3 784.5,281.1 783.9,306.0 783.2,330.9 782.3,355.7 781.3,380.6"/>
<polyline points="792.7,231.8 792.5,256.3 792.0,280.8 791.3,305.2 790.6,329.7 789.6,354.2 788.6,378.6"/>
<polyline points="796.5,232.6 796.3,256.7 795.9,280.9 795.3,305.0 794.7,329.1 793.9,353.3 793.0,377.4"/>
<polyline points="799.5,233.9 799.3,257.7 799.0,281.4 798.6,305.2 798.0,328.9 797.4,352.7 796.7,376.4"/>
<path d="M803.8 259.8 L803.3 374.6"/>
<path d="M811.1 270.8 L810.6 372.7"/>
<path d="M818.4 280.3 L817.9 370.7"/>
<path d="M825.0 289.3 L824.5 368.9"/>
<path d="M832.3 297.4 L831.8 366.9"/>
<path d="M838.9 304.1 L838.4 365.2"/>
<path d="M849.1 314.5 L848.6 362.4"/>
<path d="M853.7 319.2 L853.7 369.9"/>
<path d="M860.3 326.7 L860.3 368.1"/>
<path d="M866.9 334.3 L866.9 366.4"/>
<path d="M873.5 341.9 L873.5 364.7"/>
<path d="M879.3 348.6 L879.3 363.2"/>
<path d="M848.600 362.400 L848.600 371.200"/>
<polyline points="435.0,476.4 545.0,447.0 655.0,416.9 765.0,385.0 848.6,362.4"/>
</g>
<g clip-path="url(#redclip)">
<polyline points="487.8,280.0 488.0,377.6 560.0,376.0 620.0,369.0 680.0,356.0 740.0,330.0 800.0,290.0" fill="none" stroke="#cd8b7d" stroke-width="1.6" stroke-opacity="0.55" />
<polyline points="600.0,470.0 660.0,400.0 700.0,345.0 760.0,300.0 800.0,262.0" fill="none" stroke="#cd8b7d" stroke-width="1.6" stroke-opacity="0.5" />
<polyline points="640.0,350.0 700.0,340.0 760.0,318.0 830.0,300.0" fill="none" stroke="#cd8b7d" stroke-width="1.6" stroke-opacity="0.4" />
<polyline points="400.0,300.0 480.0,296.0 560.0,290.0 640.0,275.0 700.0,262.0 760.0,262.0 800.0,275.0" fill="none" stroke="#cd8b7d" stroke-width="1.6" stroke-opacity="0.35" />
</g>
<polygon points="400.2,270.7 530.4,270.2 591.5,270.0 605.0,266.3 620.0,262.6 662.6,251.4 664.0,250.3 670.0,248.9 725.3,233.8 740.0,229.3 753.2,225.7 773.9,230.7 795.2,232.0 800.8,234.5 802.0,237.6 800.8,248.9 802.7,257.7 806.5,265.0 814.5,275.0 827.0,292.0 854.5,320.0 887.4,358.0 882.3,362.4 848.6,371.2 765.0,395.7 755.0,399.0 657.5,430.0 635.3,435.1 545.0,459.3 535.0,462.0 438.8,489.0 421.0,426.0 411.0,370.0 403.5,320.0" fill="none" stroke="#d98578" stroke-width="1.2" stroke-linejoin="round"/>
<polyline points="400.2,270.7 403.5,320.0 411.0,370.0 421.0,426.0 438.8,489.0" fill="none" stroke="#cd6f68" stroke-width="3" stroke-opacity="0.9" />
<polyline points="802.7,257.7 806.5,265.0 814.5,275.0 827.0,292.0 854.5,320.0 887.4,358.0" fill="none" stroke="#e08478" stroke-width="1.6" stroke-opacity="0.9" />
<polyline points="311.6,70.0 327.8,93.8 340.4,106.4 368.0,113.9 399.3,125.7 398.0,160.3 396.8,190.0 396.3,222.0 397.0,240.0 400.2,271.0" fill="none" stroke="#5a5f66" stroke-width="2.2" stroke-linejoin="round"/>
<polyline points="440.0,525.0 491.2,516.9 516.3,511.9 536.3,509.4 596.0,507.0 625.0,507.0 658.6,505.3 677.0,496.0 737.0,470.5 748.4,465.0 810.2,440.2 887.2,411.8 905.0,404.0 950.0,386.0" fill="none" stroke="#575b60" stroke-width="2.6" stroke-linejoin="round"/>
<polyline points="440.0,525.0 436.4,561.0" fill="none" stroke="#5a5f66" stroke-width="4.2" />
<polyline points="440.2,527.0 436.6,561.0" fill="none" stroke="#e8e8e8" stroke-width="1.2" />
<g font-size="10.6" text-anchor="middle" fill="#000" stroke="#000" stroke-width="0.7" filter="url(#halo)">
<text x="334.9" y="95.2">128</text>
<text x="355.7" y="91.9">126</text>
<text x="377.7" y="88.2">120</text>
<text x="354.3" y="108.3">125</text>
<text x="381.3" y="106.9">121</text>
<text x="375.7" y="120.9">122</text>
<text x="372.7" y="134.9">49</text>
<text x="417.6" y="144.1">534</text>
<text x="241.7" y="165.9">45</text>
<text x="289.8" y="172.9">46</text>
<text x="311.3" y="179.7">47</text>
<text x="349.9" y="199.9">48</text>
<text x="393.6" y="211.4">67</text>
<text x="414.6" y="219.7">535</text>
<text x="225.9" y="262.1">50</text>
<text x="315.6" y="267.1">52</text>
<text x="314.8" y="279.9">119</text>
<text x="370.7" y="274.1">120</text>
<text x="395.8" y="292.9">122</text>
<text x="333.1" y="304.7">121</text>
<text x="335.6" y="331.7">54</text>
<text x="339.3" y="358.9">59</text>
<text x="343.7" y="385.9">60</text>
<text x="418.7" y="374.9">538</text>
<text x="290.5" y="431.7">64</text>
<text x="269.7" y="488.9">65</text>
<text x="317.6" y="509.6">9</text>
<text x="295.5" y="531.9">89</text>
<text x="426.6" y="475.8">66</text>
<text x="432.6" y="493.9">11</text>
<text x="428.9" y="508.1">14</text>
<text x="445.5" y="516.9">342</text>
<text x="469.3" y="510.6">339</text>
<text x="503.1" y="503.9">335</text>
<text x="529.3" y="498.9">333</text>
<text x="571.3" y="491.9">327</text>
<text x="596.5" y="487.9">324</text>
<text x="611.3" y="455.7">348</text>
<text x="644.3" y="434.9">539</text>
<text x="624.7" y="483.9">319</text>
<text x="663.5" y="474.9">313</text>
<text x="686.8" y="466.2">309</text>
<text x="708.6" y="459.2">307</text>
<text x="750.0" y="442.9">301</text>
<text x="775.8" y="436.2">295</text>
<text x="795.3" y="428.4">291</text>
<text x="811.0" y="481.5">11</text>
<text x="786.9" y="502.2">190</text>
<text x="767.8" y="518.1">188</text>
<text x="731.9" y="545.9">186</text>
<text x="871.8" y="432.4">62</text>
<text x="901.3" y="430.9">72</text>
<text x="850.3" y="448.9">273</text>
<text x="868.3" y="454.9">70</text>
<text x="888.3" y="448.9">63</text>
<text x="828.3" y="466.7">60</text>
<text x="922.3" y="467.9">69/3</text>
<text x="942.8" y="465.9">74</text>
<text x="922.8" y="482.4">65</text>
<text x="883.3" y="488.7">61/7</text>
<text x="882.8" y="504.9">61/1</text>
<text x="848.1" y="515.4">185</text>
<text x="819.8" y="526.9">14</text>
<text x="912.3" y="524.9">61/5</text>
<text x="941.3" y="525.9">53</text>
<text x="931.8" y="538.9">57/2</text>
<text x="894.8" y="544.4">113</text>
<text x="853.9" y="547.4">125</text>
<text x="828.1" y="557.4">191</text>
<text x="836.1" y="299.9">109</text>
<text x="882.8" y="294.5">110/1</text>
<text x="929.8" y="290.3">99</text>
<text x="866.1" y="309.2">400</text>
<text x="807.7" y="327.2">123</text>
<text x="881.8" y="327.2">110/2</text>
<text x="929.1" y="324.9">98</text>
<text x="942.8" y="326.7">94</text>
<text x="828.6" y="337.2">413</text>
<text x="863.6" y="354.2">401</text>
<text x="894.8" y="354.2">355</text>
<text x="926.6" y="352.2">358</text>
<text x="892.3" y="367.2">353</text>
<text x="928.6" y="365.9">265</text>
<text x="906.6" y="379.9">269</text>
<text x="838.6" y="391.7">350</text>
<text x="933.6" y="392.9">264</text>
<text x="882.3" y="399.9">276</text>
<text x="861.6" y="407.2">280</text>
<text x="894.8" y="412.4">276</text>
<text x="915.6" y="410.9">265</text>
<text x="839.8" y="414.9">284</text>
<text x="818.6" y="420.9">287</text>
<text x="926.6" y="424.2">266</text>
<text x="858.6" y="158.2">221</text>
<text x="882.7" y="163.2">222</text>
<text x="905.5" y="165.7">556</text>
<text x="811.9" y="172.8">558</text>
<text x="932.3" y="178.9">226</text>
<text x="789.3" y="196.9">550</text>
<text x="813.1" y="195.9">32/4</text>
<text x="849.7" y="196.9">36</text>
<text x="876.6" y="198.9">39</text>
<text x="928.6" y="195.2">42</text>
<text x="896.6" y="205.9">40</text>
<text x="911.6" y="206.9">41</text>
<text x="941.1" y="207.7">44</text>
<text x="856.6" y="216.4">380</text>
<text x="927.8" y="220.7">43</text>
<text x="821.1" y="225.9">34/1</text>
<text x="876.6" y="225.7">38</text>
<text x="937.3" y="239.7">563</text>
<text x="840.6" y="241.9">30/1</text>
<text x="814.8" y="253.9">31/1</text>
<text x="929.1" y="253.9">27</text>
<text x="893.6" y="257.7">29</text>
<text x="909.8" y="256.4">28</text>
<text x="862.8" y="260.7">30/5</text>
<text x="817.8" y="277.7">416</text>
<text x="836.8" y="276.4">79</text>
<text x="818.8" y="96.7">203</text>
<text x="805.7" y="111.7">212</text>
<text x="905.7" y="96.9">316</text>
<text x="933.6" y="88.9">271</text>
<text x="939.8" y="106.9">265</text>
<text x="845.8" y="124.9">219</text>
<text x="868.9" y="129.6">395</text>
<text x="896.0" y="128.8">554</text>
<text x="921.9" y="131.6">260</text>
<text x="815.7" y="150.9">214</text>
<text x="719.6" y="93.9">553</text>
<text x="744.7" y="102.7">201</text>
<text x="773.5" y="100.9">207</text>
<text x="706.6" y="154.6">204</text>
<text x="755.5" y="149.9">557</text>
<text x="780.6" y="145.9">209</text>
<text x="762.5" y="195.7">549</text>
<text x="663.3" y="85.2">203/1</text>
<text x="610.0" y="106.9">196</text>
<text x="449.8" y="149.9">522</text>
<text x="470.9" y="154.6">516</text>
<text x="500.3" y="163.6">510</text>
<text x="521.8" y="168.4">504</text>
<text x="585.7" y="166.7">181</text>
<text x="561.9" y="176.7">489</text>
<text x="585.7" y="181.7">480</text>
<text x="613.7" y="186.8">465</text>
<text x="635.6" y="190.7">456</text>
<text x="571.9" y="197.2">178</text>
<text x="668.4" y="199.6">441</text>
<text x="447.5" y="223.2">523</text>
<text x="486.8" y="227.7">514</text>
<text x="511.3" y="230.9">508</text>
<text x="532.7" y="231.9">499</text>
<text x="569.5" y="234.8">487</text>
<text x="602.7" y="237.0">472</text>
<text x="507.6" y="274.9">177</text>
<text x="695.6" y="207.7">435</text>
<text x="715.6" y="214.8">429</text>
<text x="735.7" y="221.5">420</text>
<text x="625.3" y="237.9">460</text>
<text x="653.0" y="239.1">451</text>
<text x="679.8" y="239.1">439</text>
<text x="704.9" y="239.1">433</text>
<text x="732.3" y="234.6">421</text>
<text x="744.5" y="312.3">419</text>
<text x="765.8" y="311.7">132</text>
<text x="792.0" y="310.1">127</text>
<text x="715.6" y="320.5">431</text>
<text x="681.8" y="331.0">440</text>
<text x="655.5" y="336.8">452</text>
<text x="617.9" y="348.8">467</text>
<text x="590.8" y="354.9">482</text>
<text x="444.7" y="377.0">530</text>
<text x="480.6" y="369.0">518</text>
<text x="521.4" y="364.8">509</text>
<text x="547.5" y="362.0">497</text>
<text x="567.8" y="359.0">491</text>
</g>
<defs><radialGradient id="glow"><stop offset="0" stop-color="#fff" stop-opacity="0.85"/><stop offset="0.55" stop-color="#fff" stop-opacity="0.45"/><stop offset="1" stop-color="#fff" stop-opacity="0"/></radialGradient></defs><ellipse cx="920" cy="99" rx="13" ry="18" fill="url(#glow)"/>
<path d="M918.600 85 L912.400 110.200 L920 104.300 Z" fill="#fff" fill-opacity="0.35" stroke="#000" stroke-width="1" stroke-linejoin="miter"/>
<path d="M918.600 85 L928.300 108.500 L920 104.300 Z" fill="#000" stroke="#000" stroke-width="1"/>
<rect x="812" y="532" width="105.700" height="4" fill="#000"/>
<rect x="834" y="533" width="20" height="2" fill="#fff"/><rect x="876" y="533" width="20" height="2" fill="#fff"/>
<text x="864" y="547.400" font-size="10.6" text-anchor="middle" fill="#000" stroke="#000" stroke-width="0.7" filter="url(#halo)">250 m</text>
</svg>
</body></html>
